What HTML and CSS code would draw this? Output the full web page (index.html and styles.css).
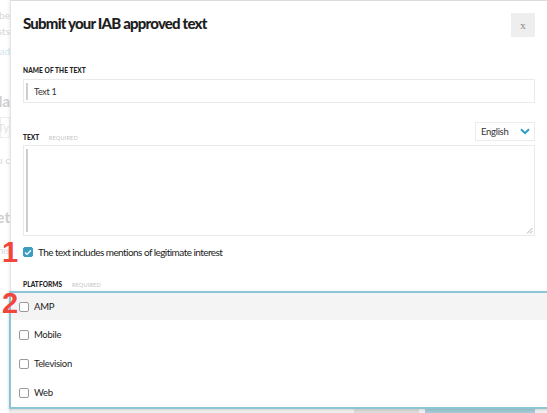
FILE: index.html
```html
<!DOCTYPE html>
<html lang="en">
<head>
    <meta charset="UTF-8">
    <meta name="viewport" content="width=device-width, initial-scale=1.0">
    <title>Submit your IAB approved text</title>
    <link rel="stylesheet" href="styles.css">
</head>
<body>
    <div class="backdrop">
        <div class="bg-line bg-1">Lorem be</div>
        <div class="bg-line bg-2">requests</div>
        <div class="bg-line bg-3 bg-link">Read</div>
        <div class="bg-line bg-4 bg-title">Pla</div>
        <div class="bg-input">Ty</div>
        <div class="bg-line bg-5">you c</div>
        <div class="bg-line bg-6 bg-title">Set</div>
        <div class="bg-line bg-7">this</div>
    </div>

    <div class="modal">
        <div class="modal-header">
            <h1>Submit your IAB approved text</h1>
            <button class="close-btn">x</button>
        </div>

        <div class="field">
            <label class="field-label">Name of the text</label>
            <div class="input">
                <span class="input-bar"></span>
                <span class="input-value">Text 1</span>
            </div>
        </div>

        <div class="field field-text">
            <div class="label-row">
                <label class="field-label">Text <span class="required">Required</span></label>
                <div class="lang-select">
                    <span>English</span>
                    <svg width="10" height="7" viewBox="0 0 10 7">
                        <path d="M1 1.2 L5 5.2 L9 1.2" fill="none" stroke="#2b9ec8" stroke-width="2"/>
                    </svg>
                </div>
            </div>
            <div class="textarea">
                <span class="textarea-bar"></span>
                <svg class="grip" width="7" height="7" viewBox="0 0 7 7">
                    <path d="M1 6.5 L6.5 1 M4 6.5 L6.5 4" stroke="#999" stroke-width="0.8"/>
                </svg>
            </div>
        </div>

        <div class="check-row">
            <span class="marker marker-1">1</span>
            <span class="checkbox checked">
                <svg width="8" height="7" viewBox="0 0 8 7">
                    <path d="M1 3.6 L3 5.4 L7 1.2" fill="none" stroke="#fff" stroke-width="1.3"/>
                </svg>
            </span>
            <span class="check-text">The text includes mentions of legitimate interest</span>
        </div>

        <div class="field field-platforms">
            <label class="field-label">Platforms <span class="required">Required</span></label>
            <div class="platform-select">
                <span class="marker marker-2">2</span>
                <div class="dropdown">
                    <div class="option active"><span class="box"></span>AMP</div>
                    <div class="option"><span class="box"></span>Mobile</div>
                    <div class="option"><span class="box"></span>Television</div>
                    <div class="option"><span class="box"></span>Web</div>
                </div>
            </div>
        </div>

        <div class="modal-footer">
            <span class="btn btn-cancel"></span>
            <span class="btn btn-submit"></span>
        </div>
    </div>
</body>
</html>
```

FILE: styles.css
```css
* {
    margin: 0;
    padding: 0;
    box-sizing: border-box;
}

body {
    font-family: Lato, 'Open Sans', sans-serif;
    background: #fff;
    color: #222;
    display: flex;
    width: 547px;
    height: 413px;
    overflow: hidden;
}

/* faded page behind the modal */
.backdrop {
    width: 10px;
    flex-shrink: 0;
    overflow: hidden;
    direction: rtl;
    color: #d6d6d6;
    font-size: 10px;
}

.bg-line {
    white-space: nowrap;
    text-align: right;
    line-height: 12px;
}

.bg-1 { margin-top: 9px; }
.bg-2 { margin-top: 4px; }
.bg-3 { margin-top: 8px; }
.bg-link { color: #cfe6ee; }
.bg-title {
    font-size: 15px;
    font-weight: 700;
    line-height: 18px;
    color: #cfcfcf;
}
.bg-4 { margin-top: 35px; }

.bg-input {
    margin-top: 7px;
    height: 21px;
    border: 1px solid #eee;
    line-height: 19px;
    color: #e2e2e2;
    font-size: 11px;
    text-align: right;
}

.bg-5 { margin-top: 16px; }
.bg-6 { margin-top: 42px; }
.bg-7 { margin-top: 18px; }

.modal {
    flex: 1;
    position: relative;
    border-left: 1px solid #e4e4e4;
    border-top: 1px solid #dcdcdc;
    box-shadow: -1px 0 3px rgba(0, 0, 0, 0.08);
    padding: 0 12px 0 12px;
    background: #fff;
}

.modal-header {
    display: flex;
    justify-content: space-between;
    align-items: flex-start;
    padding-top: 12px;
}

h1 {
    font-size: 15px;
    font-weight: 900;
    letter-spacing: -0.8px;
    line-height: 18px;
    margin-top: 1px;
    color: #1e1e1e;
}

.close-btn {
    width: 24px;
    height: 24px;
    border: none;
    background: #eeeeee;
    color: #888;
    font-family: 'Liberation Serif', serif;
    font-size: 11px;
    cursor: pointer;
}

.field-label {
    display: block;
    font-size: 6.5px;
    font-weight: 900;
    letter-spacing: 0.1px;
    text-transform: uppercase;
    color: #222;
    line-height: 9px;
}

.required {
    margin-left: 8px;
    font-size: 5.5px;
    font-weight: 400;
    color: #c4c4c4;
    letter-spacing: 0.2px;
}

.field {
    margin-top: 29px;
}

.field .input {
    margin-top: 4px;
}

.input {
    height: 24px;
    border: 1px solid #eaeaea;
    display: flex;
    align-items: center;
    padding-left: 2px;
}

.input-bar {
    width: 2px;
    height: 17px;
    background: #cfcfcf;
}

.input-value {
    margin-left: 6px;
    font-size: 9px;
    letter-spacing: -0.3px;
    color: #333;
}

.field-text {
    margin-top: 19px;
}

.label-row {
    display: flex;
    justify-content: space-between;
    align-items: flex-end;
}

.label-row .field-label {
    margin-bottom: -2px;
}

.lang-select {
    width: 60px;
    height: 19px;
    border: 1px solid #ececec;
    display: flex;
    align-items: center;
    justify-content: space-between;
    padding: 0 4px 0 5px;
    font-size: 9.5px;
    letter-spacing: -0.3px;
    color: #333;
}

.textarea {
    margin-top: 4px;
    height: 91px;
    border: 1px solid #eaeaea;
    position: relative;
    padding: 3px 2px;
}

.textarea-bar {
    display: block;
    width: 2px;
    height: 83px;
    background: #cfcfcf;
}

.grip {
    position: absolute;
    right: 1px;
    bottom: 1px;
}

.check-row {
    margin-top: 10px;
    display: flex;
    align-items: center;
    position: relative;
    height: 12px;
}

.checkbox {
    width: 10px;
    height: 10px;
    border-radius: 2px;
    border: 1px solid #999;
    display: flex;
    align-items: center;
    justify-content: center;
}

.checkbox.checked {
    background: #3b9dc2;
    border-color: #3b9dc2;
}

.check-text {
    margin-left: 5px;
    font-size: 10px;
    letter-spacing: -0.55px;
    color: #222;
}

.marker {
    position: absolute;
    font-family: 'Liberation Sans', sans-serif;
    font-weight: 700;
    font-size: 29px;
    line-height: 1;
    color: #f2453b;
    z-index: 2;
}

.marker-1 {
    left: -21px;
    top: -8px;
}

.field-platforms {
    margin-top: 22px;
}

.platform-select {
    position: relative;
    margin-top: 1px;
    height: 28px;
    border: 1px solid #eaeaea;
}

.marker-2 {
    left: -22px;
    top: -3px;
}

.dropdown {
    position: absolute;
    top: -1px;
    left: -15px;
    width: 560px;
    border: 2px solid #8cc6d6;
    box-shadow: 0 1px 3px rgba(0, 0, 0, 0.12);
    background: #fff;
    z-index: 1;
}

.option {
    height: 29px;
    display: flex;
    align-items: center;
    padding-left: 8px;
    font-size: 9.5px;
    letter-spacing: -0.3px;
    color: #222;
}

.option:first-child {
    height: 27px;
}

.option.active {
    background: #f4f4f4;
}

.box {
    width: 10px;
    height: 10px;
    border: 1px solid #9a9a9a;
    border-radius: 2px;
    background: #fff;
    margin-right: 5px;
}

.modal-footer {
    margin-top: 89px;
    display: flex;
    justify-content: flex-end;
    gap: 6px;
    background: #f0f0f0;
    margin-left: -12px;
    margin-right: -12px;
    padding-right: 12px;
    height: 30px;
}

.btn {
    height: 30px;
}

.btn-cancel {
    width: 65px;
    background: #dcdcdc;
}

.btn-submit {
    width: 110px;
    background: #a5cad6;
}
```
